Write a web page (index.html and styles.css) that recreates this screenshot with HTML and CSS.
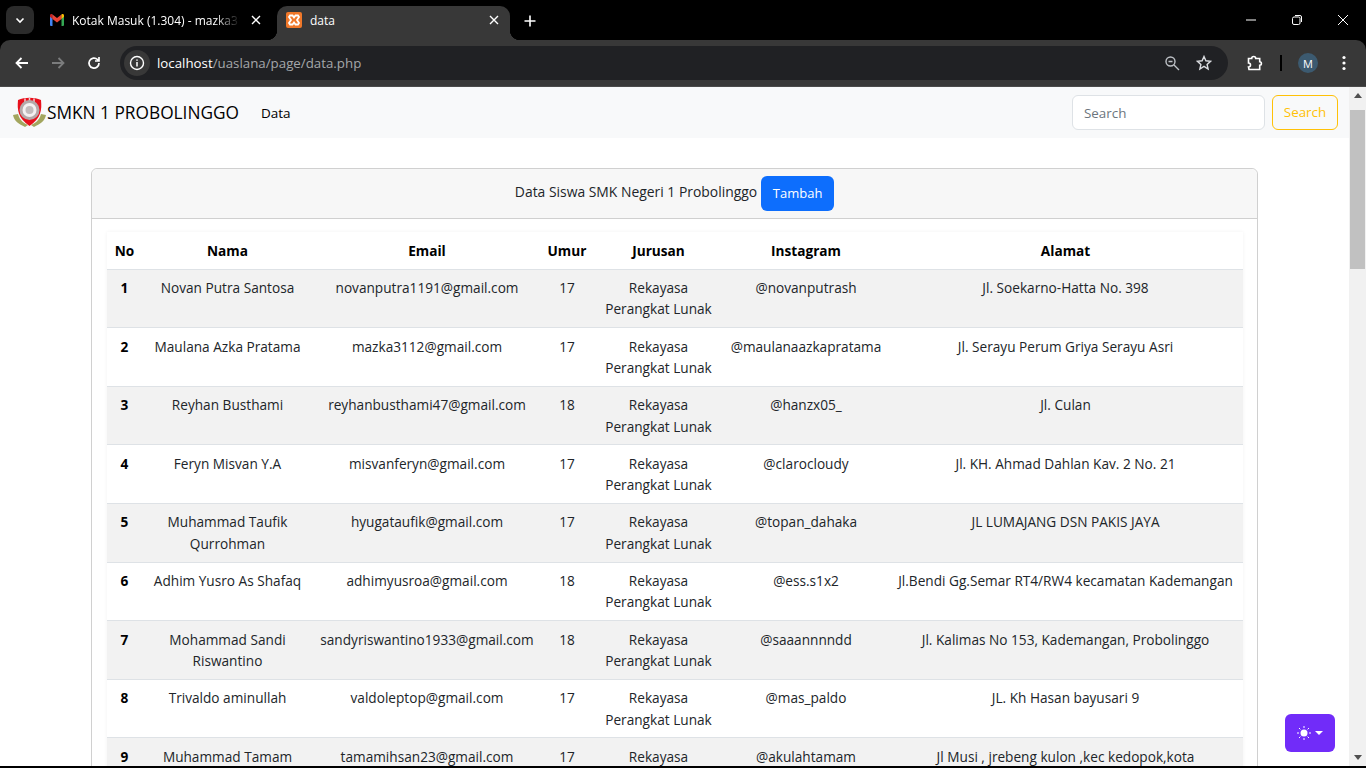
FILE: index.html
```html
<!DOCTYPE html>
<html lang="id">
<head>
<meta charset="UTF-8" />
<title>data</title>
<link rel="stylesheet" href="styles.css">
</head>
<body>

<div class="browser">
  <div class="tabstrip">
    <button class="tab-search">
      <svg width="12" height="12" viewBox="0 0 12 12"><path d="M2.500 4.500 6 8l3.500-3.500" fill="none" stroke="#fff" stroke-width="1.600"/></svg>
    </button>
    <div class="tab first">
      <svg class="favicon" width="16" height="16" viewBox="0 0 16 16">
        <path d="M1 14V4l2.500-1.500V14H2a1 1 0 0 1-1-1z" fill="#4285f4"/>
        <path d="M15 14V4l-2.500-1.500V14H14a1 1 0 0 0 1-1z" fill="#34a853"/>
        <path d="M3.500 7 1 4.800V3.500C1 2.300 2.300 1.700 3.300 2.400L3.500 2.600z" fill="#c5221f"/>
        <path d="M3.500 7V2.600L8 6l4.500-3.400V7L8 10.400z" fill="#ea4335"/>
        <path d="M12.500 7 15 4.800V3.500c0-1.200-1.300-1.800-2.300-1.100l-.2.200z" fill="#fbbc04"/>
      </svg>
      <span class="tab-title fade">Kotak Masuk (1.304) - mazka3112</span>
      <svg class="tab-close" width="10" height="10" viewBox="0 0 10 10"><path d="M1 1l8 8M9 1 1 9" stroke="#fff" stroke-width="1.400"/></svg>
    </div>
    <div class="tab active">
      <svg class="favicon" width="16" height="16" viewBox="0 0 16 16">
        <rect width="16" height="16" rx="2" fill="#f0782a"/>
        <path d="M4 3.500h2.500L8 5.500l1.500-2H12l1 1.500-2 3 2 3-1 1.500H9.500l-1.500-2-1.500 2H4L3 11l2-3-2-3z" fill="none" stroke="#fff" stroke-width="1.800"/>
      </svg>
      <span class="tab-title">data</span>
      <svg class="tab-close" width="10" height="10" viewBox="0 0 10 10"><path d="M1 1l8 8M9 1 1 9" stroke="#fff" stroke-width="1.400"/></svg>
    </div>
    <svg class="new-tab" width="12" height="12" viewBox="0 0 12 12"><path d="M6 .5v11M.5 6h11" stroke="#fff" stroke-width="1.600"/></svg>
    <div class="window-btns">
      <svg width="12" height="12" viewBox="0 0 12 12"><path d="M1 6h10" stroke="#fff"/></svg>
      <svg width="12" height="12" viewBox="0 0 12 12"><rect x="1.500" y="3" width="7.500" height="7.500" rx="1.500" fill="none" stroke="#fff"/><path d="M4 1.500h5a1.500 1.500 0 0 1 1.500 1.500v5" fill="none" stroke="#fff"/></svg>
      <svg width="12" height="12" viewBox="0 0 12 12"><path d="M1 1l10 10M11 1 1 11" stroke="#fff"/></svg>
    </div>
  </div>

  <div class="toolbar">
    <svg class="tool" width="16" height="16" viewBox="0 0 16 16"><path d="M14 8H3M7.500 3 2.500 8l5 5" fill="none" stroke="#fff" stroke-width="1.800"/></svg>
    <svg class="tool" width="16" height="16" viewBox="0 0 16 16"><path d="M2 8h11M8.500 3l5 5-5 5" fill="none" stroke="#7b7c7d" stroke-width="1.800"/></svg>
    <svg class="tool" width="16" height="16" viewBox="0 0 16 16"><path d="M13 8a5 5 0 1 1-1.500-3.500L13 6M13 2v4H9" fill="none" stroke="#fff" stroke-width="1.700"/></svg>
    <div class="omnibox">
      <span class="site-info">
        <svg width="16" height="16" viewBox="0 0 16 16"><circle cx="8" cy="8" r="6.500" fill="none" stroke="#fff" stroke-width="1.400"/><path d="M8 7v4.500M8 4.500v1.300" stroke="#fff" stroke-width="1.500"/></svg>
      </span>
      <span class="url"><b>localhost</b>/uaslana/page/data.php</span>
      <svg class="omni-icon" width="16" height="16" viewBox="0 0 16 16"><circle cx="6.500" cy="6.500" r="4.500" fill="none" stroke="#bdc1c6" stroke-width="1.400"/><path d="M4.500 6.500h4M10 10l5 5" stroke="#bdc1c6" stroke-width="1.400"/></svg>
      <svg class="omni-icon" width="16" height="16" viewBox="0 0 16 16"><path d="M8 1.500l1.900 4.300 4.600.5-3.400 3.100 1 4.600L8 11.300l-4.100 2.700 1-4.600L1.500 6.300l4.600-.5z" fill="none" stroke="#dadce0" stroke-width="1.400"/></svg>
    </div>
    <svg class="ext" width="18" height="18" viewBox="0 0 18 18"><path d="M2.500 4.500h3.200a2 2 0 0 1 4 0h4v3.300a1.500 1.500 0 0 1 0 3.400v4.300H3l-.5-2.500a2 2 0 0 0 0-4z" fill="none" stroke="#fff" stroke-width="1.600"/></svg>
    <span class="divider"></span>
    <span class="avatar">M</span>
    <svg class="dots" width="4" height="16" viewBox="0 0 4 16"><circle cx="2" cy="2.500" r="1.600" fill="#fff"/><circle cx="2" cy="8" r="1.600" fill="#fff"/><circle cx="2" cy="13.500" r="1.600" fill="#fff"/></svg>
  </div>
</div>

<div class="viewport">
  <div class="page">
    <nav class="navbar">
      <svg class="logo" width="35" height="34" viewBox="0 0 35 34">
        <path d="M1 19c1 6 6 9 12 12l3-2c-4-2-8-4-10-11zM34 19c-1 6-6 9-12 12l-3-2c4-2 8-4 10-11z" fill="#a3a65e"/>
        <path d="M6 4c7-3 16-3 23 0 1 10 0 18-11.500 26C6 22 5 14 6 4z" fill="#e8101c"/>
        <path d="M13 2.500v6M17.500 2v6M22 2.500v6" stroke="#f5c9cc" stroke-width="1.500"/>
        <circle cx="17.500" cy="14" r="10" fill="#b4a9a9"/>
        <circle cx="17.500" cy="14" r="7" fill="#f4f1f1"/>
        <circle cx="17.500" cy="14" r="4" fill="#c2bcbc"/>
      </svg>
      <a class="brand" href="#">SMKN 1 PROBOLINGGO</a>
      <a class="nav-link" href="#">Data</a>
      <form class="search">
        <input type="text" placeholder="Search" />
        <button type="button">Search</button>
      </form>
    </nav>

    <div class="card">
      <div class="card-header">
        <span class="card-title">Data Siswa SMK Negeri 1 Probolinggo</span>
        <button class="btn-add">Tambah</button>
      </div>
      <div class="card-body">
        <table>
          <colgroup>
            <col class="c-no"><col class="c-nama"><col class="c-email"><col class="c-umur"><col class="c-jur"><col class="c-ig"><col>
          </colgroup>
          <thead>
            <tr><th>No</th><th>Nama</th><th>Email</th><th>Umur</th><th>Jurusan</th><th>Instagram</th><th>Alamat</th></tr>
          </thead>
          <tbody>
            <tr><th>1</th><td>Novan Putra Santosa</td><td>novanputra1191@gmail.com</td><td>17</td><td>Rekayasa Perangkat Lunak</td><td>@novanputrash</td><td>Jl. Soekarno-Hatta No. 398</td></tr>
            <tr><th>2</th><td>Maulana Azka Pratama</td><td>mazka3112@gmail.com</td><td>17</td><td>Rekayasa Perangkat Lunak</td><td>@maulanaazkapratama</td><td>Jl. Serayu Perum Griya Serayu Asri</td></tr>
            <tr><th>3</th><td>Reyhan Busthami</td><td>reyhanbusthami47@gmail.com</td><td>18</td><td>Rekayasa Perangkat Lunak</td><td>@hanzx05_</td><td>Jl. Culan</td></tr>
            <tr><th>4</th><td>Feryn Misvan Y.A</td><td>misvanferyn@gmail.com</td><td>17</td><td>Rekayasa Perangkat Lunak</td><td>@clarocloudy</td><td>Jl. KH. Ahmad Dahlan Kav. 2 No. 21</td></tr>
            <tr><th>5</th><td>Muhammad Taufik Qurrohman</td><td>hyugataufik@gmail.com</td><td>17</td><td>Rekayasa Perangkat Lunak</td><td>@topan_dahaka</td><td>JL LUMAJANG DSN PAKIS JAYA</td></tr>
            <tr><th>6</th><td>Adhim Yusro As Shafaq</td><td>adhimyusroa@gmail.com</td><td>18</td><td>Rekayasa Perangkat Lunak</td><td>@ess.s1x2</td><td>Jl.Bendi Gg.Semar RT4/RW4 kecamatan Kademangan</td></tr>
            <tr><th>7</th><td>Mohammad Sandi Riswantino</td><td>sandyriswantino1933@gmail.com</td><td>18</td><td>Rekayasa Perangkat Lunak</td><td>@saaannnndd</td><td>Jl. Kalimas No 153, Kademangan, Probolinggo</td></tr>
            <tr><th>8</th><td>Trivaldo aminullah</td><td>valdoleptop@gmail.com</td><td>17</td><td>Rekayasa Perangkat Lunak</td><td>@mas_paldo</td><td>JL. Kh Hasan bayusari 9</td></tr>
            <tr><th>9</th><td>Muhammad Tamam</td><td>tamamihsan23@gmail.com</td><td>17</td><td>Rekayasa Perangkat Lunak</td><td>@akulahtamam</td><td>Jl Musi , jrebeng kulon ,kec kedopok,kota<br>Probolinggo</td></tr>
          </tbody>
        </table>
      </div>
    </div>

    <button class="theme-btn">
      <svg width="14" height="14" viewBox="0 0 14 14"><circle cx="7" cy="7" r="3.500" fill="#fff"/><path d="M7 0v2M7 12v2M0 7h2M12 7h2M2 2l1.400 1.400M10.600 10.600 12 12M12 2l-1.400 1.400M3.400 10.600 2 12" stroke="#fff" stroke-width="1"/></svg>
      <span class="caret"></span>
    </button>
  </div>

  <div class="scrollbar">
    <span class="arrow up"></span>
    <span class="thumb"></span>
    <span class="arrow down"></span>
  </div>
</div>
<div class="taskbar-edge"></div>

</body>
</html>
```
FILE: styles.css
```css
* { box-sizing: border-box; }
html, body { height: 100%; }
body { margin: 0; overflow: hidden; display: flex; flex-direction: column; background: #000; font-family: "Open Sans", "Noto Sans", sans-serif; }

/* browser chrome */
.browser { flex: none; height: 87px; background: #000; color: #fff; }
.tabstrip { height: 40px; display: flex; align-items: flex-start; padding: 6px 0 0 6px; }
.tab-search { width: 28px; height: 28px; border: none; border-radius: 8px; background: #2b2b2b; padding: 0; display: flex; align-items: center; justify-content: center; }
.tab { height: 34px; padding: 0 11px 6px 9px; display: flex; align-items: center; gap: 8px; border-radius: 10px 10px 0 0; font-size: 12px; }
.tab.first { width: 239px; margin-left: 4px; padding: 0 16px 6px 11px; gap: 7px; }
.tab.active { width: 233px; background: #383838; position: relative; }
.tab.active::before, .tab.active::after { content: ""; position: absolute; bottom: 0; width: 10px; height: 10px; }
.tab.active::before { left: -10px; background: radial-gradient(circle at 0 0, #000 10px, #383838 10.500px); }
.tab.active::after { right: -10px; background: radial-gradient(circle at 100% 0, #000 10px, #383838 10.500px); }
.tab .favicon { flex: none; }
.tab-title { flex: 1; white-space: nowrap; overflow: hidden; }
.tab.first .tab-title { max-width: 168px; margin-right: auto; }
.tab-title.fade { -webkit-mask-image: linear-gradient(to right, #000 85%, transparent); mask-image: linear-gradient(to right, #000 85%, transparent); }
.tab-close { flex: none; margin-left: auto; }
.new-tab { margin: 9px 0 0 14px; }
.window-btns { margin-left: auto; display: flex; gap: 34px; padding: 8px 17px 0 0; }
.toolbar { height: 47px; background: #383838; border-radius: 10px 10px 0 0; border-bottom: 1px solid #4a4a4a; display: flex; align-items: center; padding: 0 20px 0 14px; gap: 20px; }
.omnibox { flex: 1; height: 34px; margin-left: -2px; background: #202124; border-radius: 17px; display: flex; align-items: center; padding: 0 16px 0 4px; font-size: 13.300px; }
.site-info { width: 26px; height: 26px; border-radius: 50%; background: #383838; display: flex; align-items: center; justify-content: center; margin-right: 7px; }
.url { flex: 1; color: #a5a7aa; }
.url b { color: #fff; font-weight: 400; }
.omni-icon { margin-left: 16px; }
.ext { margin-left: -2px; }
.divider { width: 2px; height: 16px; background: #000; margin: 0 -4px; }
.avatar { width: 20px; height: 20px; border-radius: 50%; background: #3c5a70; color: #fff; font-size: 11px; display: flex; align-items: center; justify-content: center; }
.dots { margin-left: 4px; }

/* page */
.viewport { flex: 1; min-height: 0; display: flex; background: #fff; position: relative; }
.page { flex: 1; min-width: 0; overflow: hidden; color: #212529; font-size: 13.650px; line-height: 21.400px; }
.navbar { height: 51px; background: #f8f9fa; display: flex; align-items: center; padding: 0 11px 0 12px; }
.logo { flex: none; }
.brand { color: #000; text-decoration: none; font-size: 17.300px; margin-right: 22px; }
.nav-link { color: #000; text-decoration: none; font-size: 13.500px; padding-top: 2px; }
.search { margin-left: auto; display: flex; gap: 7px; }
.search input { width: 193px; height: 35px; border: 1px solid #dee2e6; border-radius: 6px; padding: 0 11px; font: inherit; font-size: 13.400px; background: #fff; }
.search input::placeholder { color: #6c757d; }
.search button { width: 66px; height: 35px; border: 1px solid #ffc107; border-radius: 6px; background: none; color: #ffc107; font: inherit; font-size: 13.400px; padding: 0; }

.card { margin: 30px 91px 0 91px; border: 1px solid #d0d0d0; border-radius: 6px; }
.card-header { height: 50px; background: #f7f7f7; border-bottom: 1px solid #d0d0d0; border-radius: 6px 6px 0 0; display: flex; align-items: center; justify-content: center; gap: 4px; }
.card-title { font-size: 13.900px; margin-bottom: 4px; }
.btn-add { width: 73px; height: 35px; background: #0d6efd; color: #fff; border: none; border-radius: 6px; font: inherit; font-size: 13px; padding: 0; }
.card-body { padding: 13px 14px 13px 15px; }
table { width: 100%; border-collapse: collapse; table-layout: fixed; text-align: center; box-shadow: 0 0 4px rgba(0, 0, 0, .05); }
.c-no { width: 35px; }
.c-nama { width: 171px; }
.c-email { width: 228px; }
.c-umur { width: 52px; }
.c-jur { width: 131px; }
.c-ig { width: 164px; }
thead th { height: 37px; padding: 0; color: #000; }
tbody tr { border-top: 1px solid #dee2e6; }
tbody th, tbody td { padding: 7.500px 4px 7.300px; vertical-align: top; }
tbody th { color: #000; }
tbody td { font-weight: 400; }
tbody tr:nth-child(odd) { background: #f2f2f2; }

.theme-btn { position: absolute; right: 31px; bottom: 14px; width: 50px; height: 38px; background: #712cf9; border: none; border-radius: 6px; display: flex; align-items: center; justify-content: center; gap: 4px; padding: 0; }
.caret { border: 4px solid transparent; border-top-color: #fff; border-bottom: 0; }

.scrollbar { flex: none; width: 17px; background: #f1f1f1; display: flex; flex-direction: column; align-items: center; padding-top: 6px; }
.arrow { flex: none; border: 4px solid transparent; }
.arrow.up { border-bottom: 5px solid #505050; border-top: 0; }
.arrow.down { border-top: 5px solid #505050; border-bottom: 0; margin: auto 0 6px; }
.thumb { width: 15px; height: 159px; background: #c1c1c1; margin-top: 12px; }
.taskbar-edge { flex: none; height: 2px; background: #000; }
```
